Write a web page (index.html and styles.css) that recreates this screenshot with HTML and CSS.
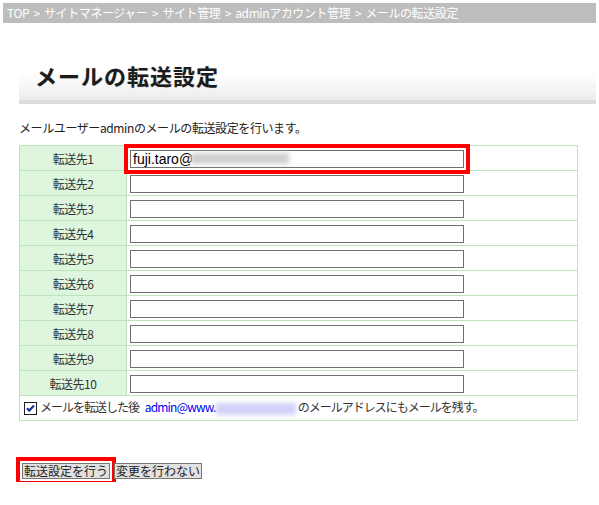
FILE: index.html
```html
<!DOCTYPE html>
<html lang="ja">
<head>
<meta charset="utf-8">
<title>メールの転送設定</title>
<link rel="stylesheet" href="styles.css">
</head>
<body>
<div class="crumb">TOP &gt; サイトマネージャー &gt; サイト管理 &gt; adminアカウント管理 &gt; メールの転送設定</div>
<div class="main">
  <div class="title-box"><h1>メールの転送設定</h1></div>
  <p class="desc">メールユーザーadminのメールの転送設定を行います。</p>
  <table class="fwd">
    <tr><th>転送先1</th><td><span class="field"><input class="addr hl" type="text" value="fuji.taro@"><span class="blur-in"></span></span></td></tr>
    <tr><th>転送先2</th><td><input class="addr" type="text"></td></tr>
    <tr><th>転送先3</th><td><input class="addr" type="text"></td></tr>
    <tr><th>転送先4</th><td><input class="addr" type="text"></td></tr>
    <tr><th>転送先5</th><td><input class="addr" type="text"></td></tr>
    <tr><th>転送先6</th><td><input class="addr" type="text"></td></tr>
    <tr><th>転送先7</th><td><input class="addr" type="text"></td></tr>
    <tr><th>転送先8</th><td><input class="addr" type="text"></td></tr>
    <tr><th>転送先9</th><td><input class="addr" type="text"></td></tr>
    <tr><th>転送先10</th><td><input class="addr" type="text"></td></tr>
    <tr><td class="keep" colspan="2"><label><input class="chk" type="checkbox" checked>メールを転送した後 <a class="mail" href="#">admin@www.</a><span class="blur-link"></span>のメールアドレスにもメールを残す。</label></td></tr>
  </table>
  <div class="actions">
    <button class="btn hl" type="button">転送設定を行う</button>
    <button class="btn" type="button">変更を行わない</button>
  </div>
</div>
</body>
</html>
```
FILE: styles.css
```css
body {
  margin: 0;
  padding: 3px;
  font-family: "Noto Sans CJK JP", sans-serif;
  font-size: 12px;
  color: #333;
}
.crumb {
  background: #bdbdbd;
  color: #fff;
  height: 20px;
  line-height: 20px;
  padding-left: 4px;
  letter-spacing: -0.4px;
  word-spacing: 2px;
  white-space: nowrap;
}
.main {
  margin-left: 16px;
}
.title-box {
  margin-top: 18px;
  height: 59px;
  border-bottom: 4px solid #dcdcdc;
  background: linear-gradient(#fff 55%, #ececec);
}
.title-box h1 {
  margin: 0;
  padding: 20px 0 0 16px;
  font-size: 22px;
  line-height: 28px;
  letter-spacing: 1px;
  color: #1c1c1c;
  text-shadow: 0 0 1px rgba(0,0,0,0.3);
}
.desc {
  margin: 16px 0 9px;
  line-height: 16px;
  letter-spacing: -0.4px;
  color: #222;
}
.fwd {
  width: 559px;
  border-collapse: collapse;
}
.fwd th, .fwd td {
  border: 1px solid #bde3bd;
  height: 24px;
  padding: 0;
}
.fwd th {
  width: 106px;
  background: #def5de;
  font-weight: normal;
  text-align: center;
  letter-spacing: -0.5px;
  color: #333;
}
.fwd td {
  padding-left: 2px;
}
.field {
  position: relative;
  display: inline-block;
  vertical-align: middle;
}
.addr {
  box-sizing: border-box;
  width: 334px;
  height: 18px;
  margin: 0 0 0 1px;
  padding: 0 2px;
  border: 1px solid #707070;
  font-family: "Liberation Sans", sans-serif;
  font-size: 14px;
  color: #000;
  vertical-align: middle;
}
.hl {
  outline: 4px solid #ff0000;
  outline-offset: 2px;
}
.blur-in {
  position: absolute;
  left: 62px;
  top: 4px;
  width: 98px;
  height: 11px;
  background: #cfcfcf;
  filter: blur(2.5px);
}
.fwd td.keep {
  padding: 0;
  height: 24px;
  letter-spacing: -1px;
  color: #333;
}
.chk {
  appearance: none;
  -webkit-appearance: none;
  box-sizing: border-box;
  width: 13px;
  height: 13px;
  margin: 3px 3px 3px 4px;
  border: 1px solid #1e1e1e;
  background: #fff url("data:image/svg+xml,%3Csvg xmlns='http://www.w3.org/2000/svg' viewBox='0 0 11 11'%3E%3Cpath d='M2 5.2 L4.3 7.6 L9 2.4' fill='none' stroke='%23163a9c' stroke-width='2.2'/%3E%3C/svg%3E") no-repeat center / 11px 11px;
  vertical-align: middle;
}
.mail {
  margin-left: 4px;
  color: #0000f0;
  text-decoration: none;
  letter-spacing: -0.8px;
}
.blur-link {
  display: inline-block;
  width: 80px;
  height: 12px;
  background: #d3d3fa;
  filter: blur(2px);
  vertical-align: middle;
  margin-right: 2px;
}
.actions {
  margin-top: 42px;
  display: flex;
  gap: 4px;
  padding-left: 3px;
}
.btn {
  font-family: "Noto Sans CJK JP", sans-serif;
  font-size: 12px;
  line-height: 14px;
  height: 16px;
  padding: 0 1px;
  margin: 0;
  background: #e1e1e1;
  border: 1px solid #777;
  border-radius: 0;
  color: #222;
}
```
